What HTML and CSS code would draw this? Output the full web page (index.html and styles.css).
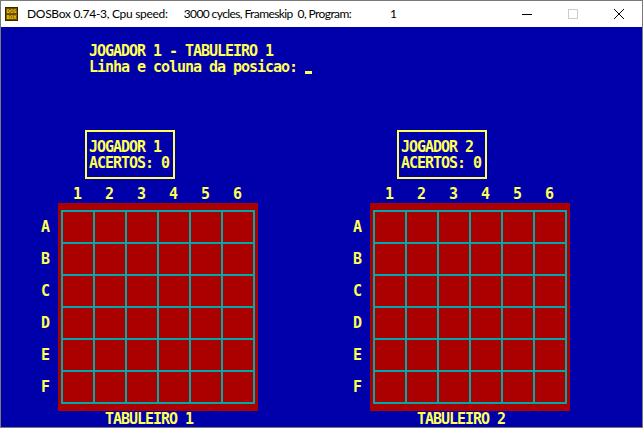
FILE: index.html
```html
<!DOCTYPE html>
<html>
<head>
<meta charset="utf-8">
<link rel="stylesheet" href="styles.css">
</head>
<body>
<div class="window">
  <div class="titlebar">
    <svg class="app-icon" width="13" height="14" viewBox="0 0 13 14">
      <rect x="0.5" y="0.5" width="12" height="13" fill="#6e4c08" stroke="#3a2400"/>
      <text x="6.5" y="6" text-anchor="middle" font-family="DejaVu Sans" font-weight="bold" font-size="5" textLength="10" lengthAdjust="spacingAndGlyphs" fill="#f5d000">DOS</text>
      <text x="6.5" y="12" text-anchor="middle" font-family="DejaVu Sans" font-weight="bold" font-size="5" textLength="10" lengthAdjust="spacingAndGlyphs" fill="#f5d000">BOX</text>
    </svg>
    <span class="title t1">DOSBox 0.74-3, Cpu speed:</span>
    <span class="title t2">3000 cycles, Frameskip&nbsp; 0, Program:</span>
    <span class="title t3">1</span>
    <div class="controls">
      <div class="ctl">
        <svg width="10" height="10" viewBox="0 0 10 10"><line x1="0" y1="5.5" x2="10" y2="5.5" stroke="#000" stroke-width="1"/></svg>
      </div>
      <div class="ctl">
        <svg width="10" height="10" viewBox="0 0 10 10"><rect x="0.5" y="0.5" width="9" height="9" fill="none" stroke="#cccccc" stroke-width="1"/></svg>
      </div>
      <div class="ctl">
        <svg width="10" height="10" viewBox="0 0 10 10"><path d="M0 0 L10 10 M10 0 L0 10" stroke="#000" stroke-width="1"/></svg>
      </div>
    </div>
  </div>
  <div class="screen">
    <div class="header">
      <div class="line">JOGADOR 1 - TABULEIRO 1</div>
      <div class="line">Linha e coluna da posicao: <span class="cursor"></span></div>
    </div>
    <div class="boards">
      <section class="player">
        <div class="scorebox">
          <div class="line">JOGADOR 1</div>
          <div class="line">ACERTOS: 0</div>
        </div>
        <div class="colnums"><span>1</span><span>2</span><span>3</span><span>4</span><span>5</span><span>6</span></div>
        <div class="boardrow">
          <div class="rowlabels"><span>A</span><span>B</span><span>C</span><span>D</span><span>E</span><span>F</span></div>
          <div class="board">
            <div class="grid">
              <i></i><i></i><i></i><i></i><i></i><i></i>
              <i></i><i></i><i></i><i></i><i></i><i></i>
              <i></i><i></i><i></i><i></i><i></i><i></i>
              <i></i><i></i><i></i><i></i><i></i><i></i>
              <i></i><i></i><i></i><i></i><i></i><i></i>
              <i></i><i></i><i></i><i></i><i></i><i></i>
            </div>
          </div>
        </div>
        <div class="caption">TABULEIRO 1</div>
      </section>
      <section class="player">
        <div class="scorebox">
          <div class="line">JOGADOR 2</div>
          <div class="line">ACERTOS: 0</div>
        </div>
        <div class="colnums"><span>1</span><span>2</span><span>3</span><span>4</span><span>5</span><span>6</span></div>
        <div class="boardrow">
          <div class="rowlabels"><span>A</span><span>B</span><span>C</span><span>D</span><span>E</span><span>F</span></div>
          <div class="board">
            <div class="grid">
              <i></i><i></i><i></i><i></i><i></i><i></i>
              <i></i><i></i><i></i><i></i><i></i><i></i>
              <i></i><i></i><i></i><i></i><i></i><i></i>
              <i></i><i></i><i></i><i></i><i></i><i></i>
              <i></i><i></i><i></i><i></i><i></i><i></i>
              <i></i><i></i><i></i><i></i><i></i><i></i>
            </div>
          </div>
        </div>
        <div class="caption">TABULEIRO 2</div>
      </section>
    </div>
  </div>
</div>
</body>
</html>
```

FILE: styles.css
```css
html, body {
  margin: 0;
  padding: 0;
  background: #ffffff;
}

.window {
  box-sizing: border-box;
  width: 643px;
  height: 428px;
  border: 1px solid #7a7a7a;
  background: #ffffff;
  display: flex;
  flex-direction: column;
  overflow: hidden;
}

.titlebar {
  height: 26px;
  display: flex;
  align-items: center;
  background: #ffffff;
  font-family: "Lato", "Noto Sans", sans-serif;
  font-size: 12px;
  color: #000000;
  white-space: nowrap;
}

.app-icon {
  margin-left: 4px;
  margin-right: 9px;
  flex: none;
}

.title {
  line-height: 16px;
}

.t1 {
  letter-spacing: -0.3px;
}

.t2 {
  margin-left: 16px;
  letter-spacing: -0.6px;
}

.t3 {
  margin-left: 39px;
}

.controls {
  margin-left: auto;
  display: flex;
  height: 26px;
}

.ctl {
  width: 46px;
  height: 26px;
  display: flex;
  align-items: center;
  justify-content: center;
}

.ctl svg {
  display: block;
}

.screen {
  height: 400px;
  background: #0000aa;
  color: #ffff55;
  font-family: "DejaVu Sans Mono", "Liberation Mono", monospace;
  font-weight: bold;
  font-size: 15px;
  letter-spacing: -1.03px;
  white-space: nowrap;
  padding-top: 16px;
  box-sizing: border-box;
}

.line {
  height: 16px;
  line-height: 16px;
}

.header {
  padding-left: 88px;
}

.cursor {
  display: inline-block;
  width: 7px;
  height: 3px;
  background: #ffff55;
  vertical-align: -2px;
}

.boards {
  display: flex;
  margin-top: 55px;
  margin-left: 40px;
  gap: 95px;
}

.player {
  width: 217px;
  display: flex;
  flex-direction: column;
}

.scorebox {
  margin-left: 44px;
  width: 90px;
  height: 49px;
  box-sizing: border-box;
  border: 2px solid #ffff55;
  padding: 7px 0 0 2px;
}

.colnums {
  margin-top: 7px;
  margin-left: 20px;
  display: grid;
  grid-template-columns: repeat(6, 32px);
  height: 17px;
  line-height: 16px;
}

.colnums span {
  text-align: center;
  height: 16px;
}

.boardrow {
  display: flex;
}

.rowlabels {
  width: 17px;
  padding-top: 16px;
  display: flex;
  flex-direction: column;
}

.rowlabels span {
  height: 32px;
  line-height: 16px;
}

.board {
  width: 200px;
  height: 208px;
  box-sizing: border-box;
  background: #aa0000;
  padding: 7px 3px;
}

.grid {
  width: 194px;
  height: 194px;
  box-sizing: border-box;
  border: 2px solid #00aaaa;
  background: #00aaaa;
  display: grid;
  grid-template-columns: repeat(6, 30px);
  grid-template-rows: repeat(6, 30px);
  gap: 2px;
}

.grid i {
  background: #aa0000;
}

.caption {
  margin-left: 64px;
  height: 16px;
  line-height: 16px;
}
```
